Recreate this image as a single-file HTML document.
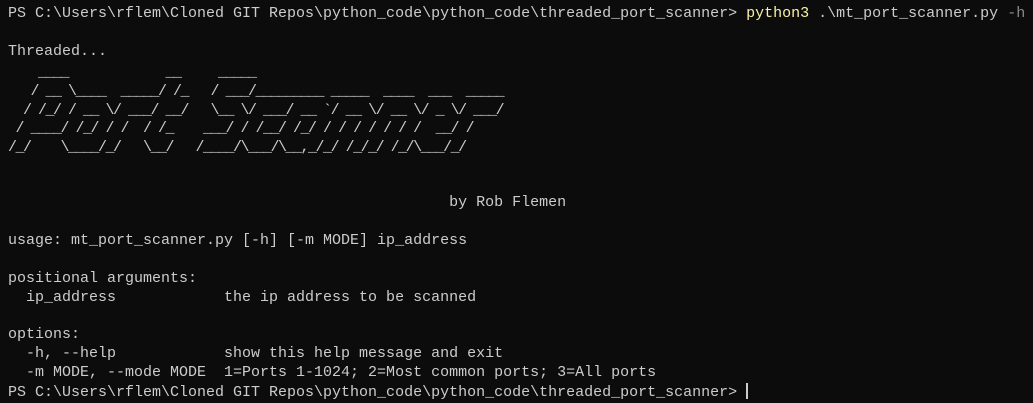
<!DOCTYPE html>
<html><head><meta charset="utf-8"><style>
html,body{margin:0;padding:0;background:#0c0c0c;width:1033px;height:403px;overflow:hidden}
pre{margin:0;position:absolute;left:8px;top:5px;font-family:"Liberation Mono",monospace;font-size:15px;line-height:18.9px;color:#cccccc;white-space:pre}
.y{color:#f9f1a5}.g{color:#8a8a8a}
.art{letter-spacing:-1.5px;position:relative;top:2px}
.cur{display:inline-block;width:2px;height:16px;background:#cccccc;vertical-align:-3px}
</style></head><body>
<pre>PS C:\Users\rflem\Cloned GIT Repos\python_code\python_code\threaded_port_scanner&gt; <span class="y">python3</span> .\mt_port_scanner.py <span class="g">-h</span>

Threaded...
<span class="art">    ____             __     _____
   / __ \____  _____/ /_   / ___/_________ _____  ____  ___  _____
  / /_/ / __ \/ ___/ __/   \__ \/ ___/ __ `/ __ \/ __ \/ _ \/ ___/
 / ____/ /_/ / /  / /_    ___/ / /__/ /_/ / / / / / / /  __/ /
/_/    \____/_/   \__/   /____/\___/\__,_/_/ /_/_/ /_/\___/_/</span>


                                                 by Rob Flemen

usage: mt_port_scanner.py [-h] [-m MODE] ip_address

positional arguments:
  ip_address            the ip address to be scanned

options:
  -h, --help            show this help message and exit
  -m MODE, --mode MODE  1=Ports 1-1024; 2=Most common ports; 3=All ports
PS C:\Users\rflem\Cloned GIT Repos\python_code\python_code\threaded_port_scanner&gt; <span class="cur"></span></pre>
</body></html>
